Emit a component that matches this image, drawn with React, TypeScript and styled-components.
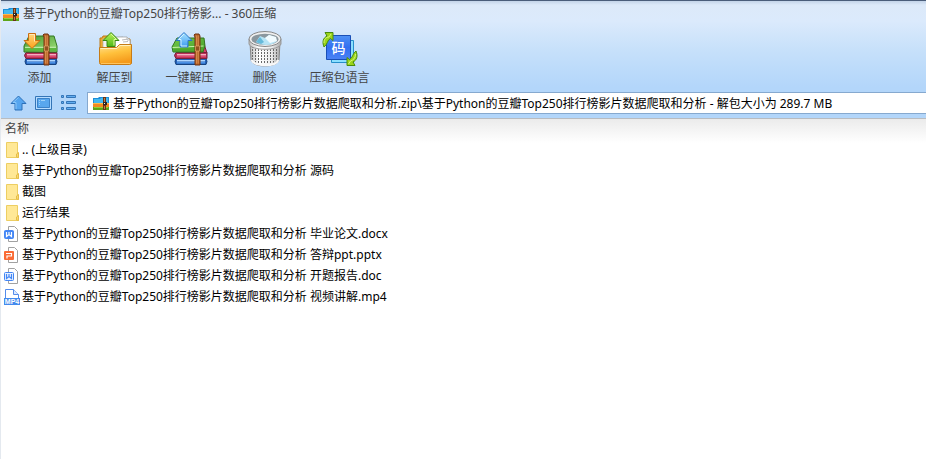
import React from "react";
import styled, { createGlobalStyle } from "styled-components";

const GlobalStyle = createGlobalStyle`
  * { box-sizing: border-box; }
  body { margin: 0; background: #fff; }
  body, button, input {
    font-family: "Noto Sans", "Noto Sans CJK SC", sans-serif;
    font-size: 12px;
  }
`;

const Window = styled.main`
  min-height: 100vh;
  border-left: 1px solid #e4e9ef;
  background: #fff;
`;

const Chrome = styled.header`
  border-top: 1px solid #4a5d7a;
  border-bottom: 1px solid #b9bcc0;
  background: linear-gradient(#c3d3e8 0, #dce9f9 4px, #dbeafc 20px, #c6e0fa 50px, #b3d6fa 86px, #b3d6fa 100%);
`;

const TitleBar = styled.div`
  display: flex;
  align-items: center;
  gap: 4px;
  height: 26px;
  padding-left: 2px;
`;

const Title = styled.h1`
  margin: 0;
  font-size: 12px;
  font-weight: 400;
  line-height: 20px;
  color: #444;
  white-space: pre;
`;

const Toolbar = styled.div`
  display: flex;
  padding-left: 1px;
`;

const ToolButton = styled.button`
  display: flex;
  flex-direction: column;
  align-items: center;
  width: 75px;
  height: 62px;
  padding: 1px 0 0;
  border: 0;
  background: none;
  color: #444;
  line-height: 20px;
  white-space: nowrap;
`;

const AddressRow = styled.div`
  display: flex;
  align-items: center;
  gap: 8px;
  padding: 3px 0 4px 9px;
`;

const NavButton = styled.button`
  display: flex;
  padding: 0;
  border: 0;
  background: none;
`;

const AddressBox = styled.label`
  display: flex;
  flex: 1;
  align-items: center;
  gap: 4px;
  height: 22px;
  margin-left: 2px;
  padding-left: 5px;
  border: 1px solid #86a9cf;
  border-right: 0;
  background: #fff;
`;

const AddressInput = styled.input`
  flex: 1;
  min-width: 0;
  padding: 0;
  border: 0;
  outline: 0;
  background: none;
  color: #000;
`;

const FileTable = styled.table`
  width: 100%;
  border-collapse: collapse;
  background: linear-gradient(#ebebeb, #fff 24px);
  background-repeat: no-repeat;
`;

const HeadCell = styled.th`
  height: 20px;
  padding: 0 4px;
  font-weight: 400;
  line-height: 20px;
  text-align: left;
  color: #444;
`;

const FileCell = styled.td`
  height: 21px;
  padding: 0 0 0 3px;
`;

const FileName = styled.div`
  display: flex;
  align-items: center;
  gap: 2px;
  height: 21px;
  line-height: 21px;
  white-space: pre;
`;

const ArchiveIcon = () => (
  <svg width="16" height="15" viewBox="0 0 16 15" aria-hidden="true">
    <path d="M0 2h5l1-1h10v7H0z" fill="#1d8fd8" />
    <path d="M1 3h6l1-1h7v5H1z" fill="#45b9f0" />
    <path d="M0 7h16v4H0z" fill="#f08a22" />
    <path d="M0 7h16v1H0z" fill="#ffb84a" />
    <path d="M0 11h16v3H0z" fill="#5da519" />
    <path d="M1 11h14v1H1z" fill="#93d136" />
    <path d="M10 1h3v13h-3z" fill="#6b3215" />
    <path d="M11 2h1v4h-1zM11 10h1v3h-1z" fill="#c08245" />
    <path d="M10 6h4v3h-4z" fill="#2e2522" />
    <path d="M11 7h1v1h-1z" fill="#eee" />
  </svg>
);

const Books = () => (
  <>
    <path d="M6 30.5h30q2 3 0 6H6q-2-3 0-6z" fill="#2460b8" stroke="#174480" />
    <path d="M7 32h28v1.5H7z" fill="#aed6ff" />
    <path d="M7 34h28v1.5H7z" fill="#4c92e5" />
    <path d="M6 24.5h31v6H6q-3-3 0-6z" fill="#b72d55" stroke="#792039" />
    <path d="M7 26h29v1.5H7z" fill="#f8acc0" />
    <path d="M7 28h29v1.2H7z" fill="#df4771" />
  </>
);

const Belt = ({ x }: { x: number }) => (
  <g transform={`translate(${x} 0)`}>
    <path d="M0 7l1-1h4l1 2v29H1V9z" fill="#b86226" stroke="#713211" />
    <path d="M2.4 7.5v28M4.2 7.5v28" stroke="#e6a363" strokeWidth=".7" />
    <path d="M1.5 18h4v5h-4z" fill="#94501f" stroke="#e7b174" strokeWidth=".6" />
  </g>
);

const AddIcon = () => (
  <svg width="39" height="40" viewBox="0 0 39 40" aria-hidden="true">
    <defs>
      <linearGradient id="addCover" x2="1" y2="1"><stop stopColor="#40932b" /><stop offset="1" stopColor="#a2e37c" /></linearGradient>
      <linearGradient id="addArrow" x2="0" y2="1"><stop stopColor="#ffd57b" /><stop offset="1" stopColor="#ffa21b" /></linearGradient>
    </defs>
    <Books />
    <path d="M9 8h25l3 10v6H4v-6z" fill="url(#addCover)" stroke="#337720" />
    <path d="M5 19h31v4H5z" fill="#5cb83f" />
    <path d="M5 19.3h31" stroke="#d4f6bf" />
    <Belt x={23} />
    <path d="M8.5 5.5h7v7h4.5L12 20.5 4 12.5h4.5z" fill="url(#addArrow)" stroke="#c96d11" />
    <path d="M9.5 6.5h5v7" fill="none" stroke="#ffeab9" />
  </svg>
);

const ExtractToIcon = () => (
  <svg width="39" height="40" viewBox="0 0 39 40" aria-hidden="true">
    <defs>
      <linearGradient id="folderFront" x2=".3" y2="1"><stop stopColor="#ffe39a" /><stop offset=".5" stopColor="#ffc13c" /><stop offset="1" stopColor="#f59a1b" /></linearGradient>
      <linearGradient id="greenArrow" x2="0" y2="1"><stop stopColor="#bdf45a" /><stop offset="1" stopColor="#4bb817" /></linearGradient>
    </defs>
    <path d="M5 10h2l1-2h8l2 3h17v18H5z" fill="#edaa32" stroke="#bd7917" />
    <path d="M8 11l20-2 2 13H8z" fill="#f3f3f3" stroke="#aaa" strokeWidth=".7" />
    <path d="M20 9h12l3 3v12H20z" fill="#fff" stroke="#999" strokeWidth=".7" />
    <path d="M27 12l6-1M28 14l5-.5M32 9v3h3" stroke="#bbb" fill="none" />
    <path d="M4.5 19.5h17l3-3h12v19q-1 1-2 1h-28q-2 0-2-2z" fill="url(#folderFront)" stroke="#c67b16" />
    <path d="M5.5 20.5h16.5l3-3h10.5" fill="none" stroke="#fff1bb" />
    <path d="M6 35.5h29" stroke="#ffc45d" />
    <path d="M16 4.5l8 8h-4v6h-8v-6H8z" fill="url(#greenArrow)" stroke="#378711" />
    <path d="M16 6l5.5 5.5H19v6" fill="none" stroke="#dcfa9b" />
  </svg>
);

const QuickExtractIcon = () => (
  <svg width="39" height="40" viewBox="0 0 39 40" aria-hidden="true">
    <defs>
      <linearGradient id="quickCover" x2="1" y2="1"><stop stopColor="#72c94b" /><stop offset="1" stopColor="#469d29" /></linearGradient>
      <linearGradient id="blueArrow" x2="0" y2="1"><stop stopColor="#a9e4ff" /><stop offset="1" stopColor="#3d9bf1" /></linearGradient>
    </defs>
    <path d="M33 13l4 12H25z" fill="#d54069" stroke="#792039" />
    <Books />
    <path d="M7 10h27l1 8-2 6H3l-1-5z" fill="url(#quickCover)" stroke="#337720" />
    <path d="M2.5 19.5l31-1.5" stroke="#c6f3a9" />
    <path d="M3 21l30-1v3H4z" fill="#4ca92d" />
    <Belt x={24} />
    <path d="M14 4.5l8 8h-4v6.5h-8v-6.5H6z" fill="url(#blueArrow)" stroke="#2975cc" />
    <path d="M14 6l-5.5 5.5H11V18h6" fill="none" stroke="#d6f4ff" />
  </svg>
);

const BinIcon = () => (
  <svg width="39" height="40" viewBox="0 0 39 40" aria-hidden="true">
    <defs>
      <linearGradient id="binBody"><stop stopColor="#bbb" /><stop offset=".3" stopColor="#fff" /><stop offset=".7" stopColor="#eee" /><stop offset="1" stopColor="#aaa" /></linearGradient>
      <pattern id="binHoles" width="3" height="3" patternUnits="userSpaceOnUse"><path d="M1 0h1v2H1z" fill="#686868" /></pattern>
    </defs>
    <path d="M5 14l1 18c2 8 26 8 28 0l1-18z" fill="url(#binBody)" stroke="#888" />
    <path d="M6 18c7 5 21 5 28 0l-1 14c-4 5-22 5-26 0z" fill="url(#binHoles)" />
    <path d="M6.5 32c3 7 24 7 27 0" fill="none" stroke="#f8f8f8" strokeWidth="2" />
    <path d="M4 11v5c2 7 30 7 32 0v-5" fill="url(#binBody)" stroke="#999" />
    <ellipse cx="20" cy="11" rx="16" ry="7.5" fill="#eee" stroke="#888" />
    <ellipse cx="20" cy="11.3" rx="13.5" ry="5.6" fill="#8b979e" />
    <path d="M11 14l4-6 5 2 4-3 6 2 2 4c-5 5-15 5-21 1z" fill="#b7e4f5" />
    <path d="M20 10l4-3 7 2 1 4-7 2z" fill="#f1fbff" />
    <path d="M11 14l4-5 4 5-3 2z" fill="#66bada" />
  </svg>
);

const LanguageIcon = () => (
  <svg width="39" height="40" viewBox="0 0 39 40" aria-hidden="true">
    <defs>
      <linearGradient id="codeTile" x2="0" y2="1"><stop stopColor="#4d91f5" /><stop offset=".5" stopColor="#326ff0" /><stop offset="1" stopColor="#4b82f5" /></linearGradient>
    </defs>
    <path d="M11.5 12.5h22v22h-22z" fill="#8bdfff" stroke="#268fca" />
    <path d="M6.5 7.5h24v24h-24z" fill="url(#codeTile)" stroke="#1a4fb6" />
    <text x="18.5" y="24.5" fill="#fff" fontFamily="Noto Sans CJK SC, sans-serif" fontSize="14" fontWeight="500" textAnchor="middle">码</text>
    <path d="M4 19c-2-5-1-9 3-11L5 4.5h8v8l-2.5-2C7 12 8 16 4 19z" fill="#9bd51b" stroke="#4a8b0c" />
    <path d="M4 15c0-4 2-6 5-6l2-3" fill="none" stroke="#d6f476" />
    <path d="M36 23c2 5 1 9-3 11l2 3.5h-8v-8l2.5 2c3.5-1.5 2.5-5.5 6.5-8.5z" fill="#9bd51b" stroke="#4a8b0c" />
    <path d="M35.5 26c0 4-2 6-5 7l-2 3" fill="none" stroke="#d6f476" />
  </svg>
);

const UpIcon = () => (
  <svg width="17" height="16" viewBox="0 0 17 16" aria-hidden="true">
    <path d="M8.5 1L16 8.5h-4V15H5V8.5H1z" fill="#55a5ef" stroke="#2c70b9" />
    <path d="M8.5 2.5L3 7.5h3V14" fill="none" stroke="#8bc8fa" />
  </svg>
);

const PaneIcon = () => (
  <svg width="17" height="16" viewBox="0 0 17 16" aria-hidden="true">
    <path d="M.5 1.5h16v13H.5z" fill="#b6dcff" stroke="#3475b7" />
    <path d="M2.5 3.5h12v9h-12z" fill="#58a7ee" stroke="#3b82c8" />
    <path d="M4 5h1v1H4zM4 7h1v1H4zM4 9h1v1H4zM6 5h4v1H6z" fill="#9ed2fa" />
  </svg>
);

const ListIcon = () => (
  <svg width="17" height="16" viewBox="0 0 17 16" aria-hidden="true">
    {[1, 7, 13].map((y) => (
      <g key={y} fill="#62adf0" stroke="#3475b7">
        <path d={`M1.5 ${y - 0.5}h2v2h-2z`} />
        <path d={`M6.5 ${y - 0.5}h9v2h-9z`} />
      </g>
    ))}
  </svg>
);

const FolderIcon = () => (
  <svg width="16" height="18" viewBox="0 0 16 18" aria-hidden="true">
    <path d="M2.5 1.5h11v11h1v4h-12z" fill="#ffe896" stroke="#edce62" />
    <path d="M12.500 16v-3l2-1.500v5z" fill="#f9d970" stroke="#e5bd48" />
  </svg>
);

const Sheet = () => (
  <path d="M4.5.5h6l3 3v12h-9z" fill="#fff" stroke="#a1a1a1" />
);

const WordIcon = ({ pale }: { pale?: boolean }) => (
  <svg width="16" height="16" viewBox="0 0 16 16" aria-hidden="true">
    <Sheet />
    <rect x=".5" y="4.5" width="9" height="8" rx="1" fill={pale ? "#e8f1ff" : "#4386f5"} stroke="#4386f5" />
    <path d="M2.5 6v4.5l2.500-2 2.500 2V6M5 6v2.500" fill="none" stroke={pale ? "#4386f5" : "#fff"} strokeWidth="1.2" />
  </svg>
);

const SlidesIcon = () => (
  <svg width="16" height="16" viewBox="0 0 16 16" aria-hidden="true">
    <Sheet />
    <rect y="4" width="10" height="9" rx="1" fill="#fa6b35" />
    <path d="M2 6.5h5.500v2.500h-4.500v2.500" fill="none" stroke="#fff" strokeWidth="1.2" />
  </svg>
);

const VideoIcon = () => (
  <svg width="16" height="16" viewBox="0 0 16 16" aria-hidden="true">
    <path d="M1.5 10V.5h8l5 5V10" fill="#fff" stroke="#548ceb" />
    <path d="M9.5.5v5h5" fill="#dbe9ff" stroke="#548ceb" />
    <path d="M0 9h16v7H0z" fill="#438aed" />
    <text x="8" y="15" fill="#fff" fontFamily="Liberation Sans, sans-serif" fontSize="7" fontWeight="700" textAnchor="middle">MP4</text>
  </svg>
);

const tools = [
  { label: "添加", Icon: AddIcon },
  { label: "解压到", Icon: ExtractToIcon },
  { label: "一键解压", Icon: QuickExtractIcon },
  { label: "删除", Icon: BinIcon },
  { label: "压缩包语言", Icon: LanguageIcon },
];

const base = "基于Python的豆瓣Top250排行榜影片数据爬取和分析";

const files = [
  { name: ".. (上级目录)", icon: <FolderIcon /> },
  { name: `${base} 源码`, icon: <FolderIcon /> },
  { name: "截图", icon: <FolderIcon /> },
  { name: "运行结果", icon: <FolderIcon /> },
  { name: `${base} 毕业论文.docx`, icon: <WordIcon /> },
  { name: `${base} 答辩ppt.pptx`, icon: <SlidesIcon /> },
  { name: `${base} 开题报告.doc`, icon: <WordIcon pale /> },
  { name: `${base} 视频讲解.mp4`, icon: <VideoIcon /> },
];

export default function App() {
  return (
    <>
      <GlobalStyle />
      <Window>
        <Chrome>
          <TitleBar>
            <ArchiveIcon />
            <Title>基于Python的豆瓣Top250排行榜影... - 360压缩</Title>
          </TitleBar>
          <Toolbar>
            {tools.map(({ label, Icon }) => (
              <ToolButton key={label} type="button">
                <Icon />
                {label}
              </ToolButton>
            ))}
          </Toolbar>
          <AddressRow>
            <NavButton type="button" aria-label="向上"><UpIcon /></NavButton>
            <NavButton type="button" aria-label="预览"><PaneIcon /></NavButton>
            <NavButton type="button" aria-label="列表"><ListIcon /></NavButton>
            <AddressBox>
              <ArchiveIcon />
              <AddressInput
                aria-label="路径"
                defaultValue={`${base}.zip\\${base} - 解包大小为 289.7 MB`}
              />
            </AddressBox>
          </AddressRow>
        </Chrome>
        <FileTable>
          <thead>
            <tr><HeadCell scope="col">名称</HeadCell></tr>
          </thead>
          <tbody>
            {files.map(({ name, icon }) => (
              <tr key={name}>
                <FileCell>
                  <FileName>{icon}{name}</FileName>
                </FileCell>
              </tr>
            ))}
          </tbody>
        </FileTable>
      </Window>
    </>
  );
}
